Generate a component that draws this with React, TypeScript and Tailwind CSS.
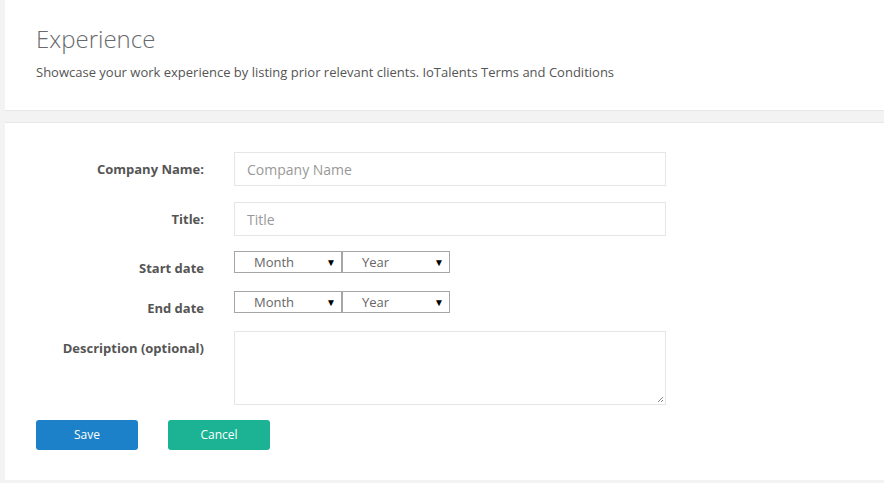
import React from "react";

const font = {fontFamily: '"Open Sans", "Noto Sans", sans-serif'};

function Label({children}: {children: React.ReactNode}) {
    return (
        <div className="w-[199px] shrink-0 pt-[7px] text-right text-[13px] leading-[20px] font-bold text-[#555]">
            {children}
        </div>
    );
}

function FakeSelect({text}: {text: string}) {
    return (
        <div className="flex h-[22px] w-[108px] items-center justify-between border border-[#a6a6a6] bg-white pt-px pl-[19px] pr-[5px] text-[13px] text-[#666]">
            <span>{text}</span>
            <span className="text-[10px] text-black">▼</span>
        </div>
    );
}

function DateRow({label}: {label: string}) {
    return (
        <div className="flex h-[22px] gap-[30px]">
            <Label>{label}</Label>
            <div className="flex">
                <FakeSelect text="Month"/>
                <FakeSelect text="Year"/>
            </div>
        </div>
    );
}

export default function App() {
    return (
        <div className="min-h-[483px] bg-[#f3f3f4] pl-[5px] pb-[4px]" style={font}>
            <div className="h-[111px] border-b border-[#e7e7e7] bg-white px-[31px] pt-[22px]">
                <h1 className="text-[24px] leading-[33px] font-light text-[#676a6c]">Experience</h1>
                <p className="mt-[8px] text-[13px] leading-[18px] text-[#555]">
                    Showcase your work experience by listing prior relevant clients. IoTalents Terms and Conditions
                </p>
            </div>

            <div className="mt-[11px] border-t border-[#e7e7e7] bg-white pt-[29px] pb-[30px]">
                <div className="flex gap-[30px]">
                    <Label>Company Name:</Label>
                    <div className="flex h-[34px] w-[432px] items-center border border-[#e5e6e7] px-[12px] text-[14px] text-[#999]">
                        Company Name
                    </div>
                </div>
                <div className="mt-[16px] flex gap-[30px]">
                    <Label>Title:</Label>
                    <div className="flex h-[34px] w-[432px] items-center border border-[#e5e6e7] px-[12px] text-[14px] text-[#999]">
                        Title
                    </div>
                </div>
                <div className="mt-[15px]">
                    <DateRow label="Start date"/>
                </div>
                <div className="mt-[18px]">
                    <DateRow label="End date"/>
                </div>
                <div className="mt-[18px] flex gap-[30px]">
                    <Label>Description (optional)</Label>
                    <div className="relative h-[74px] w-[432px] border border-[#e5e6e7]">
                        <svg className="absolute right-[1px] bottom-[1px]" width="7" height="7" viewBox="0 0 7 7">
                            <path d="M6 1 L1 6 M6 4 L4 6" stroke="#888" strokeWidth="1"/>
                        </svg>
                    </div>
                </div>
                <div className="mt-[15px] flex gap-[30px] pl-[31px]">
                    <button className="h-[30px] w-[102px] rounded-[3px] bg-[#1c81c8] text-[12px] text-white">Save</button>
                    <button className="h-[30px] w-[102px] rounded-[3px] bg-[#1bb394] text-[12px] text-white">Cancel</button>
                </div>
            </div>
        </div>
    );
}
